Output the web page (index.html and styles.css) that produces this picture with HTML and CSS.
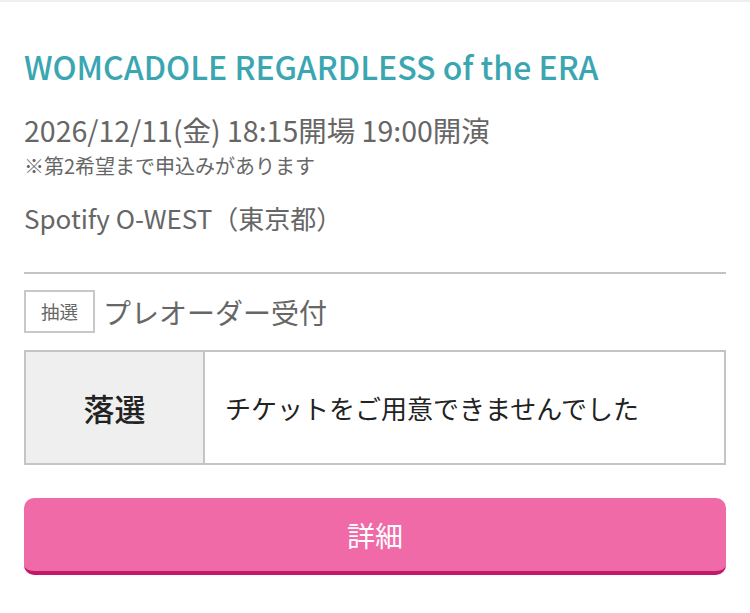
FILE: index.html
```html
<!DOCTYPE html>
<html lang="ja">
<head>
  <meta charset="UTF-8" />
  <meta name="viewport" content="width=device-width, initial-scale=1.0"/>
  <title>WOMCADOLE REGARDLESS of the ERA</title>
  <link rel="stylesheet" href="styles.css">
</head>
<body>

  <div class="top-strip"></div>

  <div class="content">
    <h1 class="event-title">WOMCADOLE REGARDLESS of the ERA</h1>
    <p class="event-date">2026/12/11(金) 18:15開場 19:00開演</p>
    <p class="event-note">※第2希望まで申込みがあります</p>
    <p class="event-venue">Spotify O-WEST（東京都）</p>

    <hr class="divider">

    <div class="reception">
      <span class="badge">抽選</span>
      <span class="reception-name">プレオーダー受付</span>
    </div>

    <div class="result">
      <div class="result-label">落選</div>
      <div class="result-text">チケットをご用意できませんでした</div>
    </div>

    <button class="btn-detail">詳細</button>
  </div>

</body>
</html>
```

FILE: styles.css
```css
body {
  font-family: 'Noto Sans CJK JP', 'Noto Sans', sans-serif;
  background: #fff;
  color: #666;
  margin: 0;
  padding: 0;
}

.top-strip {
  height: 2px;
  background: #efefef;
}

.content {
  padding: 0 24px;
}

.event-title {
  margin: 43px 0 0;
  font-size: 32px;
  line-height: 42px;
  font-weight: 500;
  color: #3aa6b2;
}

.event-date {
  margin: 24px 0 0;
  font-size: 28.5px;
  line-height: 38px;
}

.event-note {
  margin: 2px 0 0;
  font-size: 20px;
  line-height: 30px;
}

.event-venue {
  margin: 18px 0 0;
  font-size: 26px;
  line-height: 38px;
}

.divider {
  margin: 35px 0 0;
  border: none;
  height: 2px;
  background: #c4c4c4;
}

.reception {
  display: flex;
  align-items: center;
  gap: 8px;
  margin-top: 16px;
}

.badge {
  border: 2px solid #c8c8c8;
  padding: 4px 15px;
  font-size: 18.5px;
  line-height: 31px;
}

.reception-name {
  font-size: 28px;
  line-height: 40px;
}

.result {
  display: flex;
  margin-top: 17px;
  height: 115px;
  box-sizing: border-box;
  border: 2px solid #c4c4c4;
  color: #222;
}

.result-label {
  width: 179px;
  box-sizing: border-box;
  border-right: 2px solid #c4c4c4;
  background: #efefef;
  display: flex;
  align-items: center;
  justify-content: center;
  font-size: 31px;
  font-weight: 500;
}

.result-text {
  display: flex;
  align-items: center;
  padding-left: 20px;
  font-size: 26px;
}

.btn-detail {
  display: block;
  width: 100%;
  height: 77px;
  margin-top: 33px;
  background: #f06aa8;
  color: #fff;
  border: none;
  border-bottom: 4px solid #c2196b;
  border-radius: 10px;
  font-family: inherit;
  font-size: 28px;
  cursor: pointer;
}
```
